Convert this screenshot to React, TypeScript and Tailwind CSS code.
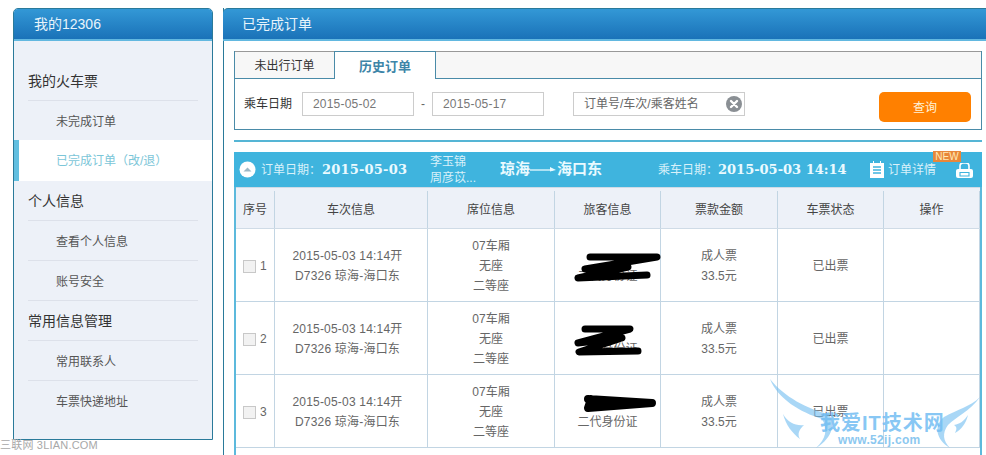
const font = { fontFamily: '"Liberation Sans", "Noto Sans CJK SC", sans-serif' };

const MENU = [
  { title: "我的火车票", items: [{ label: "未完成订单", short: true }, { label: "已完成订单（改/退）", active: true }] },
  { title: "个人信息", items: [{ label: "查看个人信息", line: true }, { label: "账号安全", line: true }] },
  { title: "常用信息管理", items: [{ label: "常用联系人", line: true }, { label: "车票快递地址" }] },
];

const COLUMNS = ["序号", "车次信息", "席位信息", "旅客信息", "票款金额", "车票状态", "操作"];
const GRID = "grid grid-cols-[39px_153px_127px_106px_117px_106px_1fr]";

// 涂抹痕迹 (coordinates relative to the passenger cell)
const SCRIBBLES = [
  "M35 28 L102 28 L30 40 L73 38 L23 49 L92 46",
  "M30 27 L75 27 L23 41 L67 36 L24 50 L83 49",
  "M33 24 L97 28 L33 33 L36 24",
];

function Sidebar() {
  return (
    <div className="w-[200px] h-[432px] shrink-0 bg-[#edf1f8] border border-[#2a7a9a] rounded-t-[5px] overflow-hidden">
      <div className="h-[32px] pl-[20px] flex items-center text-[14px] text-[#e8f4fb] bg-gradient-to-b from-[#3398d6] to-[#1a72b8] border-b-2 border-[#62b8e0]">
        我的12306
      </div>
      <div className="pt-[20px]">
        {MENU.map((group) => (
          <div key={group.title}>
            <div className="h-[40px] mx-[14px] pt-[2px] flex items-center text-[14px] text-[#333] border-b border-[#dde1ea]">
              {group.title}
            </div>
            {group.items.map((item) =>
              item.active ? (
                <div key={item.label} className="h-[41px] flex items-center pl-[37px] text-[12px] text-[#7cc6d8] bg-white border-l-[5px] border-[#62bfe0]">
                  {item.label}
                </div>
              ) : (
                <div key={item.label} className={`${item.short ? "h-[39px]" : "h-[40px]"} mx-[14px] pl-[28px] pt-[2px] flex items-center text-[12px] text-[#555] ${item.line ? "border-b border-[#dde1ea]" : ""}`}>
                  {item.label}
                </div>
              )
            )}
          </div>
        ))}
      </div>
    </div>
  );
}

function FilterBox() {
  return (
    <div className="border border-[#4a8ba8]">
      <div className="flex h-[28px] bg-[#f7f7f7] border-t border-[#999] -mt-px -mb-px">
        <div className="w-[99px] pt-px flex items-center justify-center text-[12px] text-[#333] border-b border-[#4a8ba8]">未出行订单</div>
        <div className="w-[102px] pt-[2px] flex items-center justify-center text-[13px] font-bold text-[#3d85a8] bg-white border-x border-t border-[#4a8ba8] -mt-px">历史订单</div>
        <div className="flex-1 border-b border-[#4a8ba8]" />
      </div>
      <div className="h-[51px] flex items-center pl-[9px] pr-[9px] pt-px text-[12px]">
        <span className="w-[58px] text-[#333]">乘车日期</span>
        <div className="w-[112px] h-[24px] border border-[#ccc] pl-[10px] flex items-center text-[#777] tracking-[0.2px]">2015-05-02</div>
        <span className="w-[18px] text-center text-[#666]">-</span>
        <div className="w-[112px] h-[24px] border border-[#ccc] pl-[10px] flex items-center text-[#777] tracking-[0.2px]">2015-05-17</div>
        <div className="ml-[29px] w-[172px] h-[24px] border border-[#ccc] pl-[10px] pr-[2px] flex items-center justify-between text-[#666]">
          <span>订单号/车次/乘客姓名</span>
          <svg width="16" height="16" viewBox="0 0 16 16">
            <circle cx="8" cy="8" r="8" fill="#8a8f94" />
            <path d="M5 5l6 6M11 5l-6 6" stroke="#fff" strokeWidth="2.4" strokeLinecap="round" />
          </svg>
        </div>
        <button className="ml-auto mr-px w-[92px] h-[30px] mt-[6px] pt-[2px] rounded-[5px] bg-[#ff8000] text-[12px] text-[#fff3d8]">查询</button>
      </div>
    </div>
  );
}

function OrderBar() {
  const serifBold = { fontFamily: '"DejaVu Serif", serif' };
  return (
    <div className="h-[35px] bg-[#3fb4de] flex items-center pl-[5px] text-[12px] text-[#d9f1fa]">
      <svg width="17" height="17" viewBox="0 0 17 17" className="shrink-0">
        <circle cx="8.5" cy="8.5" r="8" fill="#fff" />
        <path d="M4.5 10.5L8.5 6.5L12.5 10.5Z" fill="#9db8c6" />
      </svg>
      <span className="ml-[5px] w-[61px]">订单日期：</span>
      <b className="w-[108px] text-[13px] tracking-[0.2px] text-[#eafaff]" style={serifBold}>2015-05-03</b>
      <div className="w-[70px] leading-[16px]">
        <div>李玉锦</div>
        <div>周彦苡...</div>
      </div>
      <b className="w-[158px] flex items-center text-[15px] text-[#eafaff]">
        琼海
        <svg width="27" height="9" viewBox="0 0 27 9" className="shrink-0">
          <path d="M0 5h23" stroke="#eafaff" strokeWidth="1.3" />
          <path d="M20 2l6 3-6 1.500z" fill="#eafaff" />
        </svg>
        海口东
      </b>
      <span className="w-[60px]">乘车日期：</span>
      <b className="w-[152px] text-[13px] text-[#eafaff]" style={serifBold}>2015-05-03 14:14</b>
      <svg width="14" height="17" viewBox="0 0 14 17" className="shrink-0">
        <path d="M0 2h3V0h1v2h6V0h1v2h3v15H0z" fill="#fff" />
        <path d="M3 6h8M3 9h8M3 12h8" stroke="#3fb4de" strokeWidth="1.4" />
      </svg>
      <span className="ml-[4px] w-[68px]">订单详情</span>
      <div className="relative">
        <svg width="17" height="15" viewBox="0 0 17 15" className="block mt-[2px]">
          <path d="M4 6.500V3a3 3 0 013-3h3a3 3 0 013 3v3.500" fill="none" stroke="#fff" strokeWidth="1.600" />
          <path d="M2 6h13a2 2 0 012 2v5a2 2 0 01-2 2H2a2 2 0 01-2-2V8a2 2 0 012-2z" fill="#fff" />
          <path d="M4 9.500h9V13H4z" fill="none" stroke="#3fb4de" strokeWidth="1.100" />
        </svg>
        <span className="absolute left-[-23px] top-[-10px] w-[28px] h-[11px] flex items-center justify-center bg-[#e8873a] text-[10px] leading-none text-[#ffe9b8]">NEW</span>
      </div>
    </div>
  );
}

function TicketRow({ index, scribble, last }: { index: number; scribble: string; last: boolean }) {
  const cell = "flex flex-col items-center justify-center text-center border-r border-[#c2d5e3] leading-[20px] pt-[2px]";
  return (
    <div className={`${GRID} h-[73px] border-b border-[#c2d5e3] text-[12px] text-[#666]`}>
      <div className="flex items-center pl-[7px] pt-[2px] gap-[4px] border-r border-[#c2d5e3]">
        <span className="w-[13px] h-[13px] border border-[#c8c8c8] bg-[#f2f2f2]" />
        <span>{index}</span>
      </div>
      <div className={`${cell} pr-[7px] tracking-[0.2px]`}>
        <div>2015-05-03 14:14开</div>
        <div>D7326 琼海-海口东</div>
      </div>
      <div className={cell}>
        <div>07车厢</div>
        <div>无座</div>
        <div>二等座</div>
      </div>
      <div className={`${cell} relative`}>
        <div>&nbsp;</div>
        <div>二代身份证</div>
        <svg width="106" height="73" viewBox="0 0 106 73" className="absolute left-0 top-0">
          <path d={scribble} fill="none" stroke="#000" strokeWidth={last ? 8 : 7} strokeLinecap="round" strokeLinejoin="round" />
        </svg>
      </div>
      <div className={cell}>
        <div>成人票</div>
        <div>33.5元</div>
      </div>
      <div className={cell}>已出票</div>
      <div className="border-r border-[#c2d5e3]" />
    </div>
  );
}

function Watermark() {
  return (
    <div className="absolute left-[770px] top-[379px] w-[216px] h-[76px] pointer-events-none">
      <svg width="216" height="76" viewBox="0 0 216 76" className="absolute left-0 top-0" fill="#6fbdf0" fillOpacity="0.6">
        <path d="M0 0C8 20 30 33 52 40C58 50 56 60 46 69C64 58 66 42 58 35C38 30 14 18 0 0Z" />
        <path d="M13 35C18 44 26 47 34 46C29 51 27 55 30 60C22 54 16 46 13 35Z" />
        <path d="M210 18C200 32 186 38 178 46C172 54 173 62 180 69C165 60 164 46 174 38C188 30 200 28 210 18Z" />
        <path d="M198 36C194 42 190 45 184 46C187 48 187 50 185 54C192 50 196 44 198 36Z" />
      </svg>
      <div className="absolute left-[50px] top-[32px] text-[20px] leading-[24px] font-bold tracking-[1px] text-[#72bdf2]/85 whitespace-nowrap">我爱IT技术网</div>
      <div className="absolute left-[68px] top-[54px] text-[12px] leading-[14px] font-bold tracking-[0.3px] text-[#8cc8f0]">www.52ij.com</div>
    </div>
  );
}

export default function App() {
  return (
    <div className="relative h-[455px] overflow-hidden bg-white" style={font}>
      <div className="flex pl-[13px] pt-[8px] gap-[10px]">
        <Sidebar />
        <div className="flex-1 min-w-0 h-[447px] border-l border-[#2a7a9a]">
          <div className="h-[33px] pl-[19px] flex items-center text-[14px] text-[#e8f4fb] bg-gradient-to-b from-[#3398d6] to-[#1a72b8] border-t border-[#2a7a9a] border-b-2 border-b-[#62b8e0] rounded-tl-[5px] -ml-px">
            已完成订单
          </div>
          <div className="w-[748px] ml-[10px] pt-[10px]">
            <FilterBox />
            <div className="h-[2px] mt-[10px] bg-[#55b5d5]" />
            <div className="mt-[10px]">
              <OrderBar />
              <div className="h-[270px] border-x-2 border-[#5cb9dc]">
                <div className={`${GRID} h-[42px] pt-[3px] bg-[#edf1f8] border-y border-[#cfdbe6] text-[12px] text-[#444]`}>
                  {COLUMNS.map((c) => (
                    <div key={c} className="flex items-center justify-center border-r border-[#c2d5e3]">{c}</div>
                  ))}
                </div>
                {SCRIBBLES.map((s, i) => (
                  <TicketRow key={i} index={i + 1} scribble={s} last={i === 2} />
                ))}
              </div>
            </div>
          </div>
        </div>
      </div>
      <div className="absolute left-0 top-[438px] text-[11px] leading-[14px] tracking-[0.2px] text-[#a8a8a8]">三联网 3LIAN.COM</div>
      <Watermark />
    </div>
  );
}
